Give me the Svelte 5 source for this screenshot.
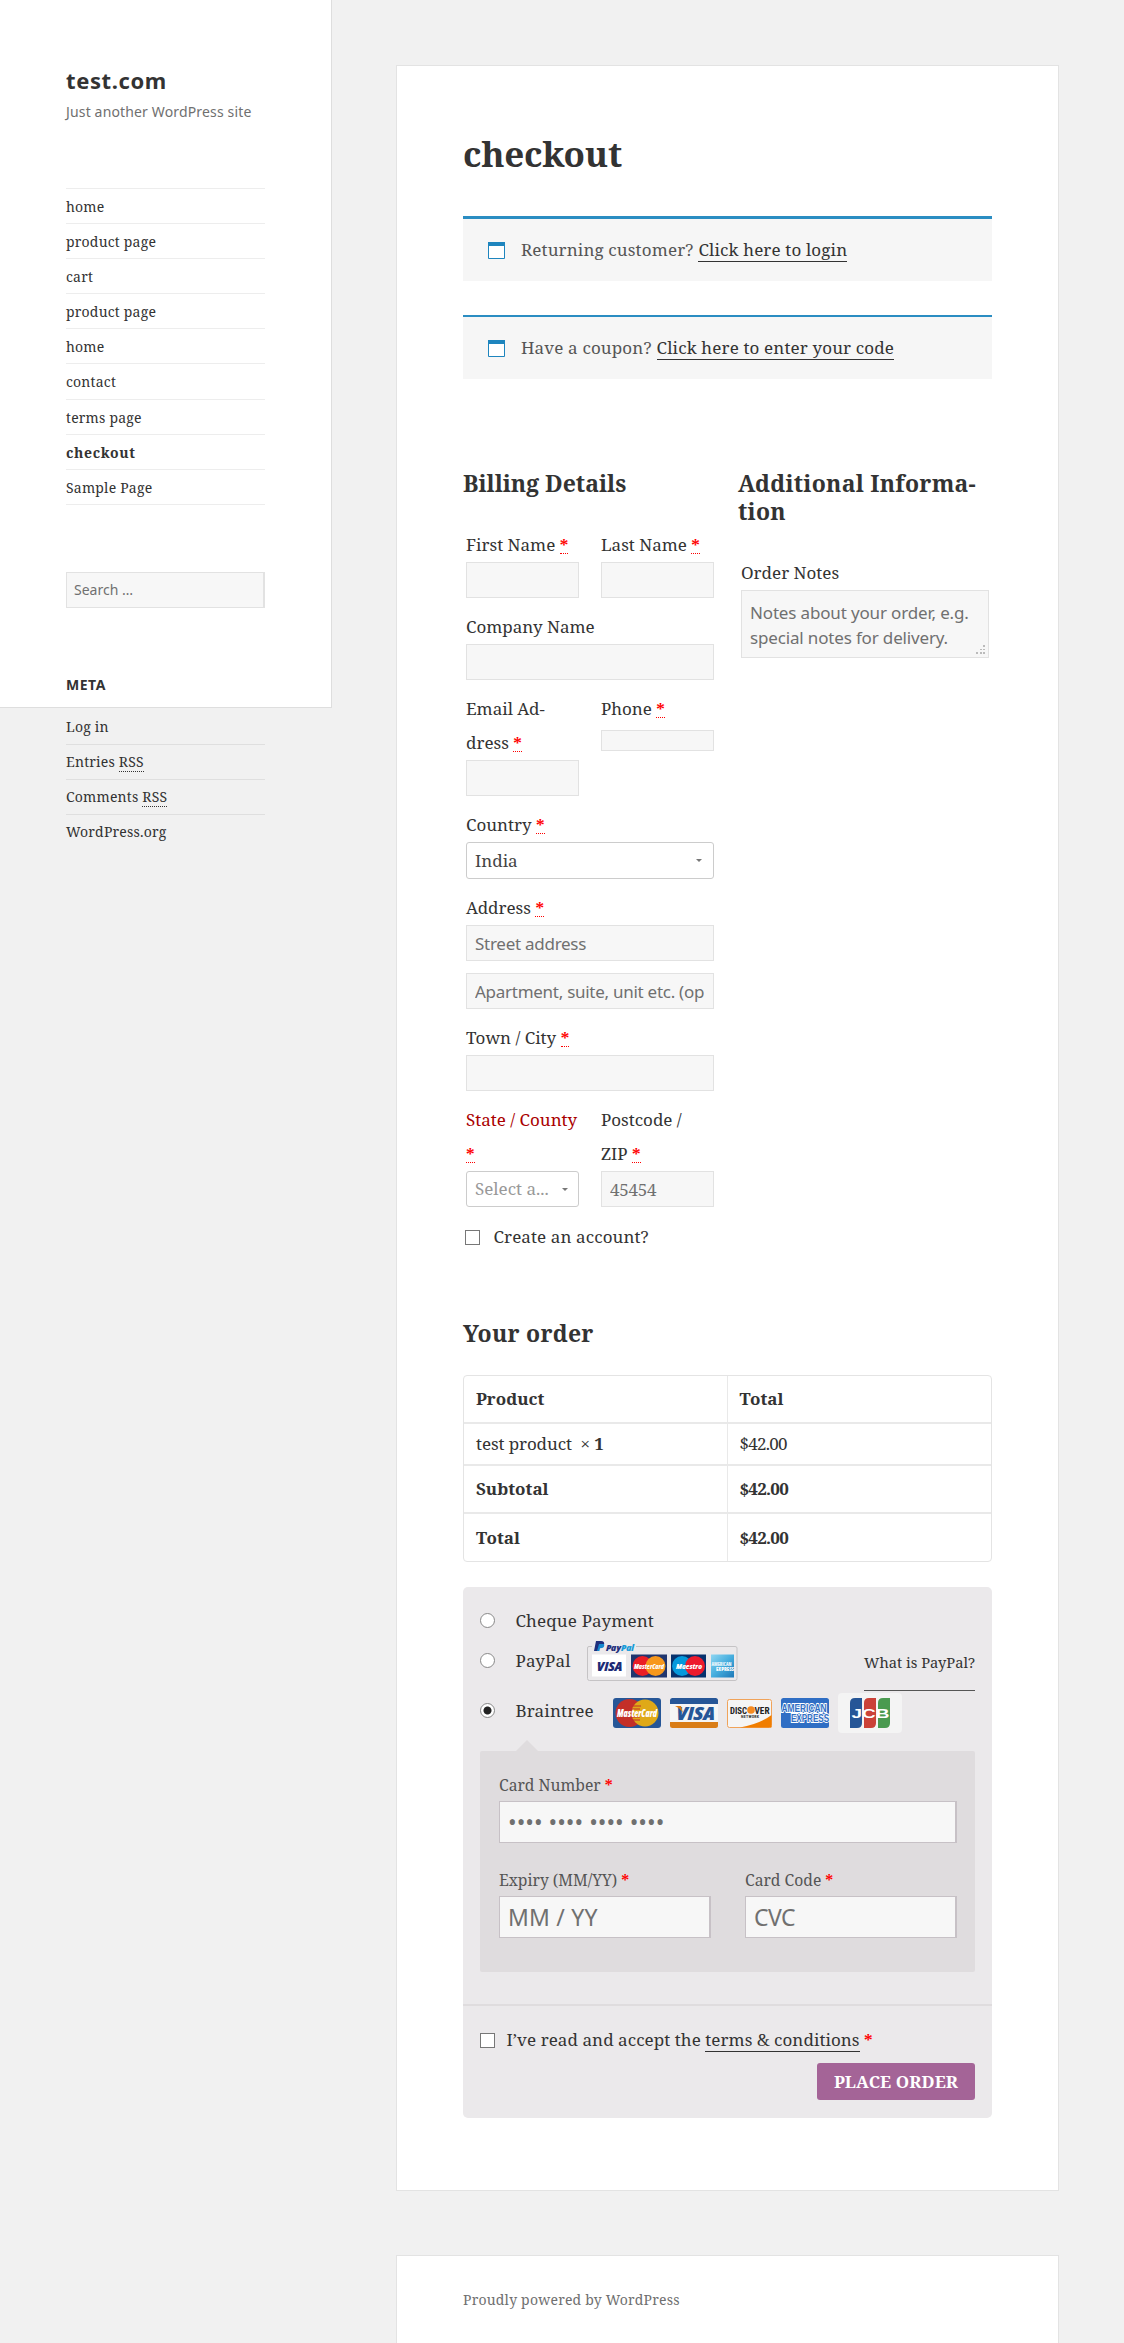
<script>
  const nav = ['home', 'product page', 'cart', 'product page', 'home', 'contact', 'terms page', 'checkout', 'Sample Page'];
  const notices = [
    { text: 'Returning customer?', link: 'Click here to login', kind: 'login' },
    { text: 'Have a coupon?', link: 'Click here to enter your code', kind: 'coupon' }
  ];
</script>

{#snippet req()}<abbr class="req">*</abbr>{/snippet}

<div class="page">
  <aside class="sidebar">
    <p class="site-title">test.com</p>
    <p class="tagline">Just another WordPress site</p>
    <ul class="nav">
      {#each nav as item}
        <li class:current={item === 'checkout'}>{item}</li>
      {/each}
    </ul>
    <input class="search" placeholder="Search …" />
    <h2 class="widget-title">META</h2>
    <ul class="meta">
      <li>Log in</li>
      <li>Entries <abbr>RSS</abbr></li>
      <li>Comments <abbr>RSS</abbr></li>
      <li>WordPress.org</li>
    </ul>
  </aside>

  <div class="content">
    <main class="card">
      <h1>checkout</h1>

      {#each notices as n}
        <div class="notice {n.kind}">
          <svg class="calendar" width="17" height="17" viewBox="0 0 17 17"><path d="M.5 .5h16v16H.5z" fill="#fff" stroke="#1e85be" /><path d="M0 0h17v4H0z" fill="#1e85be" /></svg>
          <span class="notice-text">{n.text}</span>
          <a href="#top">{n.link}</a>
        </div>
      {/each}

      <div class="columns">
        <section class="billing">
          <h3>Billing Details</h3>
          <div class="pair">
            <div class="field"><label for="first">First Name {@render req()}</label><input id="first" /></div>
            <div class="field"><label for="last">Last Name {@render req()}</label><input id="last" /></div>
          </div>
          <div class="field"><label for="company">Company Name</label><input id="company" /></div>
          <div class="pair">
            <div class="field"><label for="email">Email Ad-<br />dress {@render req()}</label><input id="email" /></div>
            <div class="field"><label for="phone">Phone {@render req()}</label><input id="phone" class="short" /></div>
          </div>
          <div class="field">
            <label for="country">Country {@render req()}</label>
            <div id="country" class="select country"><span>India</span><i></i></div>
          </div>
          <div class="field">
            <label for="addr1">Address {@render req()}</label>
            <input id="addr1" placeholder="Street address" />
            <input id="addr2" class="second" placeholder="Apartment, suite, unit etc. (optional)" />
          </div>
          <div class="field"><label for="town">Town / City {@render req()}</label><input id="town" /></div>
          <div class="pair">
            <div class="field">
              <label class="invalid" for="state"><span class="state">State / County</span><br />{@render req()}</label>
              <div id="state" class="select muted"><span>Select a...</span><i></i></div>
            </div>
            <div class="field">
              <label for="zip">Postcode /<br />ZIP {@render req()}</label>
              <input id="zip" class="zip" placeholder="45454" />
            </div>
          </div>
          <div class="account"><span class="check"></span><span>Create an account?</span></div>
        </section>

        <section class="extra">
          <h3>Additional Informa-<br />tion</h3>
          <div class="field">
            <label for="notes">Order Notes</label>
            <div id="notes" class="notes">
              Notes about your order, e.g.<br /><span>special notes for delivery.</span>
              <svg class="grip" width="9" height="9" viewBox="0 0 9 9" fill="#bbb"><path d="M7 0h2v2H7zM4 4h2v1H4zM7 4h2v1H7zM0 7h2v2H0zM4 7h2v2H4zM7 7h2v2H7z" /></svg>
            </div>
          </div>
        </section>
      </div>

      <h3 class="order-title">Your order</h3>
      <table>
        <tbody>
          <tr class="r1"><th>Product</th><th>Total</th></tr>
          <tr class="r2"><td class="product">test product&nbsp; × <b>1</b></td><td class="money">$42.00</td></tr>
          <tr class="r3"><th>Subtotal</th><th class="money">$42.00</th></tr>
          <tr class="r4"><th>Total</th><th class="money">$42.00</th></tr>
        </tbody>
      </table>

      <div class="payment">
        <div class="methods">
          <div class="method m1"><span class="radio"></span><span class="m-name">Cheque Payment</span></div>
          <div class="method m2">
            <span class="radio"></span><span class="m-name">PayPal</span>
            <svg class="paypal" width="152" height="42" viewBox="0 0 152 42">
              <path d="M6 6.500H3Q1.500 6.500 1.500 8V38.500Q1.500 40.500 3.500 40.500H149Q151 40.500 151 38.500V8Q151 6.500 149 6.500H50" fill="none" stroke="#c5c3c5" />
              <path d="M10 1h5q4 0 3 4q-1 3-5 3l-1 3H8z" fill="#1f2f7c" /><path d="M13 4h5q1 3-2 4l-2 .3-.6 2.700H11z" fill="#1589cf" />
              <text x="20" y="10.500" class="pp" textLength="28" lengthAdjust="spacingAndGlyphs"><tspan fill="#1f2f7c">Pay</tspan><tspan fill="#189bd8">Pal</tspan></text>
              <rect x="6" y="14.500" width="34" height="22" fill="#fff" />
              <text x="10.500" y="30.500" class="logo" font-size="12" fill="#1c2b76" textLength="26" lengthAdjust="spacingAndGlyphs">VISA</text>
              <rect x="45" y="14.500" width="36" height="23" fill="#21366f" />
              <circle cx="56.500" cy="26" r="10" fill="#ea1d25" /><circle cx="69.500" cy="26" r="10" fill="#f7981d" />
              <text x="48" y="28.500" class="logo" font-size="7.500" fill="#fff" textLength="30" lengthAdjust="spacingAndGlyphs">MasterCard</text>
              <rect x="85" y="14.500" width="35" height="23" fill="#07326e" />
              <circle cx="96" cy="26" r="10" fill="#0599dc" /><circle cx="109" cy="26" r="10" fill="#ed1b2d" />
              <text x="90" y="28.500" class="logo" font-size="7.500" fill="#fff" textLength="26" lengthAdjust="spacingAndGlyphs">Maestro</text>
              <defs><linearGradient id="ax" x1="0" y1="0" x2="1" y2="1"><stop offset="0" stop-color="#8fd6f2" /><stop offset=".5" stop-color="#46aede" /><stop offset="1" stop-color="#1d78b8" /></linearGradient></defs>
              <rect x="125" y="14.500" width="23" height="23" fill="url(#ax)" />
              <text x="125.500" y="26" class="logo up" font-size="5" fill="#e8f6fc" textLength="20" lengthAdjust="spacingAndGlyphs">AMERICAN</text>
              <text x="130" y="30.500" class="logo up" font-size="5" fill="#fff" textLength="18" lengthAdjust="spacingAndGlyphs">EXPRESS</text>
            </svg>
            <a class="what" href="#top">What is PayPal?</a>
          </div>
          <div class="method m3">
            <span class="radio on"></span><span class="m-name">Braintree</span>
            <svg class="cards" width="290" height="40" viewBox="0 0 290 40">
              <rect x="0" y="5" width="48" height="30" rx="3" fill="#265697" />
              <circle cx="16.500" cy="20" r="14" fill="#c32f28" /><circle cx="32" cy="20" r="13.500" fill="#dfa918" />
              <path d="M19 13h9M18 16h9M18 24h9M19 27h8" stroke="#c32f28" />
              <text x="4" y="24" class="logo" font-size="10.500" fill="#fff" textLength="40" lengthAdjust="spacingAndGlyphs">MasterCard</text>
              <rect x="57" y="5" width="48" height="30" rx="2.500" fill="#f5f5f5" />
              <path d="M57 11V7.500Q57 5 59.500 5h43q2.500 0 2.500 2.500V11z" fill="#265697" /><path d="M57 29v3.500Q57 35 59.500 35h43q2.500 0 2.500-2.500V29z" fill="#d97d17" />
              <text x="63" y="26.500" class="logo" font-size="18" fill="#265697" textLength="39" lengthAdjust="spacingAndGlyphs">VISA</text>
              <path d="M62 13h6l2 7q-3-5-8-7" fill="#d97d17" />
              <rect x="114.500" y="6.500" width="44" height="28" rx="2" fill="#f5f5f5" stroke="#f0a35a" />
              <path d="M127 34.500Q147 31 158.500 22V34.500z" fill="#f07d00" />
              <circle cx="138" cy="17" r="3.800" fill="#f58a1f" />
              <text x="117" y="20.500" class="disc" font-size="9.500" fill="#222" textLength="17" lengthAdjust="spacingAndGlyphs">DISC</text>
              <text x="141.500" y="20.500" class="disc" font-size="9.500" fill="#222" textLength="15" lengthAdjust="spacingAndGlyphs">VER</text>
              <text x="128" y="25" class="disc" font-size="4" fill="#333" textLength="18">NETWORK</text>
              <rect x="168" y="5" width="48" height="30" rx="2.500" fill="#2f6ec4" />
              <text x="168.500" y="18.500" class="amex" textLength="45" lengthAdjust="spacingAndGlyphs">AMERICAN</text>
              <text x="178" y="29" class="amex" textLength="38" lengthAdjust="spacingAndGlyphs">EXPRESS</text>
              <rect x="225" y="0" width="64" height="40" rx="4" fill="#f4f4f4" />
              <path d="M237 35V10q0-5 5-5h7v25q0 5-5 5z" fill="#265697" /><path d="M251 35V10q0-5 5-5h7v25q0 5-5 5z" fill="#cb4238" /><path d="M265 35V10q0-5 5-5h7v25q0 5-5 5z" fill="#4a9a50" />
              <text x="238.500" y="24.500" class="jcb" textLength="38" lengthAdjust="spacingAndGlyphs">JCB</text>
            </svg>
          </div>
          <div class="pay-box">
            <span class="arrow"></span>
            <div class="cfield"><label for="card">Card Number <b>*</b></label><input id="card" class="dots" placeholder="•••• •••• •••• ••••" /></div>
            <div class="cpair">
              <div class="cfield"><label for="exp">Expiry (MM/YY) <b>*</b></label><input id="exp" placeholder="MM / YY" /></div>
              <div class="cfield"><label for="cvc">Card Code <b>*</b></label><input id="cvc" placeholder="CVC" /></div>
            </div>
          </div>
        </div>
        <div class="place">
          <div class="terms"><span class="check"></span><span>I’ve read and accept the <a href="#top">terms &amp; conditions</a> <b>*</b></span></div>
          <button>PLACE ORDER</button>
        </div>
      </div>
    </main>
    <footer class="card foot">Proudly powered by WordPress</footer>
  </div>
</div>

<style>
  :global(body) { margin: 0; background: #f1f1f1; }
  * { box-sizing: border-box; }
  .page {
    --serif: "Noto Serif", "DejaVu Serif Condensed", "DejaVu Serif", serif;
    --sans: "Noto Sans", sans-serif;
    display: flex; align-items: flex-start; width: 1124px; height: 2343px; overflow: hidden;
    background: #f1f1f1; color: #333; font: 17px/34px var(--serif); font-stretch: condensed; white-space: nowrap;
  }
  p, ul, h1, h2, h3 { margin: 0; padding: 0; }
  ul { list-style: none; }
  a { color: #333; text-decoration: none; }
  input { display: block; font: 17px/24px var(--sans); color: #707070; outline: 0; border-radius: 0; }
  ::placeholder { color: #707070; opacity: 1; }

  .sidebar { flex: none; width: 332px; height: 708px; padding: 66px 66px 0; background: #fff; border: 1px solid #dedede; border-width: 0 1px 1px 0; font-size: 14px; letter-spacing: .2px; }
  .site-title { font: 700 22px/29px var(--sans); letter-spacing: .6px; }
  .tagline { margin-top: 7px; font: 14px/20px var(--sans); letter-spacing: .15px; color: #707070; }
  .nav { margin-top: 66px; width: 199px; border-top: 1px solid #ededed; }
  .nav li { height: 35.100px; line-height: 35px; border-bottom: 1px solid #ededed; }
  .nav .current { font-weight: 700; letter-spacing: .65px; }
  .search { width: 199px; height: 36px; margin-top: 67px; padding: 0 7px; font-size: 14px; background: #f7f7f7; border: 1px solid #e2e2e2; border-right-width: 2px; }
  .widget-title { margin-top: 67px; font: 700 14px/20px var(--sans); letter-spacing: .5px; }
  .meta { margin-top: 15px; width: 199px; }
  .meta li { height: 35px; line-height: 33.500px; border-bottom: 1px solid #dfdfdf; }
  .meta li:last-child { border: 0; }
  .meta abbr { border-bottom: 1px dotted #333; }

  .content { flex: none; width: 662px; margin: 65px 0 0 64px; }
  .card { background: #fff; border: 1px solid #e3e3e3; padding: 0 66px; width: 663px; }
  main.card { height: 2126px; padding-top: 66px; }
  h1 { height: 46px; font-size: 35px; line-height: 43px; letter-spacing: -.25px; }
  .notice { display: flex; align-items: center; height: 65px; padding: 2px 0 2px 25px; background: #f6f6f6; border-top: 2px solid #2b8dc2; color: #555; letter-spacing: .14px; }
  .login { margin-top: 38px; border-top-width: 3px; }
  .coupon { height: 64px; margin-top: 34px; }
  .calendar { margin-right: 16px; }
  .notice a { margin-left: 5px; line-height: 23px; border-bottom: 1px solid #333; }
  .columns { display: flex; gap: 21px; height: 850px; margin-top: 90px; }
  .billing, .extra { width: 254px; }
  h3 { font-size: 23px; line-height: 28px; letter-spacing: 0; }
  .extra h3, h3.order-title { letter-spacing: .25px; }
  .field { width: 248px; margin: 0 3px 12px; position: relative; }
  h3 + .pair { margin-top: 31px; }
  .extra .field { margin-top: 31px; }
  .pair { display: flex; gap: 22px; margin: 0 3px; }
  .pair .field { width: 113px; margin: 0 0 12px; }
  .field label { display: block; }
  .field input { width: 100%; height: 36px; padding: 0 9px 0 8px; background: #f7f7f7; border: 1px solid #e2e2e2; letter-spacing: -.27px; }
  .field .short { height: 21px; margin-top: 4px; }
  .field .second { margin-top: 12px; }
  .field .zip { font-family: var(--serif); }
  .req { color: red; font-weight: 700; border-bottom: 1px dotted red; line-height: 16px; display: inline-block; height: 17px; vertical-align: baseline; }
  .invalid { color: #a00; }
  .select { display: flex; justify-content: space-between; align-items: center; height: 36px; padding: 0 11px 0 8px; border: 1px solid #ccc; border-radius: 3px; color: #444; }
  .country { height: 37px; }
  .muted { color: #999; padding-right: 10px; }
  .select i { border: 3px solid transparent; border-top-color: #777; border-bottom: 0; }
  .account, .terms { display: flex; align-items: center; }
  .account { margin: 1px 0 0 2px; gap: 13.500px; letter-spacing: .1px; }
  .check { width: 15px; height: 15px; margin-top: 1px; background: #fff; border: 1px solid #777; }
  .notes { position: relative; height: 68px; padding: 9px 8px; background: #f7f7f7; border: 1px solid #e2e2e2; color: #707070; font: 17px/25px var(--sans); letter-spacing: -.16px; }
  .grip { position: absolute; right: 3px; bottom: 3px; }

  table { width: 529px; height: 187px; margin-top: 28px; border-spacing: 0; border: 1px solid #e4e4e4; border-radius: 4px; table-layout: fixed; }
  th, td { padding: 0 12px; text-align: left; line-height: 24px; border-bottom: 2px solid #e9e9e9; }
  tr > :first-child { border-right: 1px solid #e9e9e9; }
  tr:last-child > * { border-bottom: 0; }
  .r1 { height: 48px; } .r2 { height: 42px; } .r3 { height: 48px; } .r4 { height: 47px; }
  .money { letter-spacing: -.75px; }
  .product { letter-spacing: -.1px; }

  .payment { width: 529px; height: 531px; margin-top: 25px; background: #ebe9eb; border-radius: 5px; }
  .methods { height: 419px; padding: 16px 17px 0; border-bottom: 2px solid #dfdcde; }
  .method { display: flex; align-items: center; letter-spacing: .15px; }
  .m1 { height: 36px; } .m2 { height: 44px; } .m3 { height: 56px; }
  .radio { flex: none; width: 15px; height: 15px; margin: -2px 20.500px 0 0; border: 1px solid #888; border-radius: 50%; background: #fff; }
  .on { background: radial-gradient(circle, #222 0 3.500px, #fff 4.500px); }
  .paypal { margin: 0 0 0 15px; }
  .what { margin: 6px 0 0 auto; padding-bottom: 2px; font-size: 14.700px; letter-spacing: 0; border-bottom: 1px solid #555; line-height: 51px; }
  .cards { margin: 4px 0 0 19px; }
  .logo, .pp { font-family: "Open Sans", sans-serif; font-weight: 800; font-style: italic; letter-spacing: 0; }
  .pp { font-size: 9px; }
  .up { font-style: normal; }
  .disc { font-family: Roboto, sans-serif; font-weight: 700; letter-spacing: 0; }
  .amex { font: 700 10px "Liberation Sans", sans-serif; letter-spacing: 0; fill: #2f6ec4; stroke: #fff; stroke-width: 1.800px; paint-order: stroke; }
  .jcb { font: 700 13px "Liberation Sans", sans-serif; letter-spacing: 0; fill: #fff; }
  .pay-box { position: relative; width: 495px; height: 221px; margin-top: 12px; padding: 18px 18px 0 19px; background: #dfdcde; border-radius: 2px; }
  .arrow { position: absolute; left: 36px; top: -11px; border: 11px solid transparent; border-top: 0; border-bottom-color: #dfdcde; }
  .cfield label { display: block; color: #555; font-size: 15.700px; line-height: 32px; }
  .cfield b, .terms b { color: red; }
  .cfield input { width: 100%; height: 42px; padding: 0 8px; background: #f7f7f7; border: 1px solid #c7c1c6; border-right-width: 2px; font-size: 23px; }
  #cvc { letter-spacing: -.6px; }
  #exp { letter-spacing: .2px; }
  .cpair { display: flex; gap: 34px; margin-top: 21px; }
  .cpair .cfield { width: 212px; }
  .place { padding: 17px 17px 0; }
  .terms { gap: 11.500px; letter-spacing: .06px; }
  .terms a { border-bottom: 1px solid #333; }
  button { display: block; width: 158px; height: 37px; margin: 6px 0 0 auto; padding: 0; border: 0; border-radius: 3px; background: #a46497; color: #fff; font: 700 17px/37px var(--serif); letter-spacing: .1px; }
  .foot { height: 100px; margin-top: 64px; padding-top: 27px; font-size: 14px; letter-spacing: .2px; color: #707070; }
</style>
